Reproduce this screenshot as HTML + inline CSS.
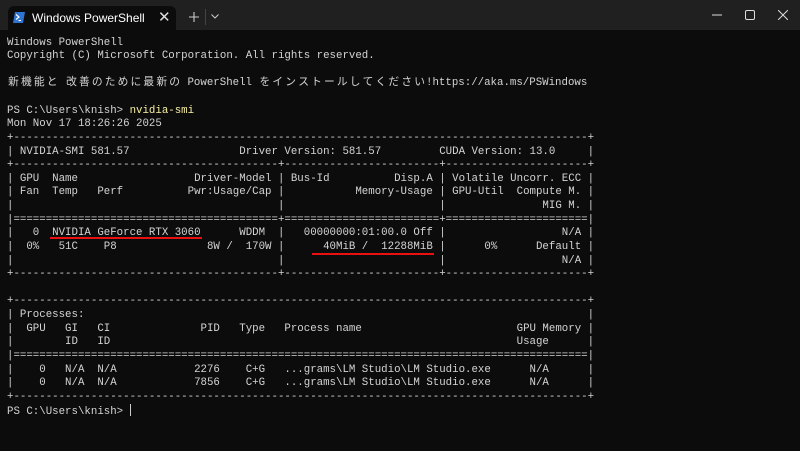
<!DOCTYPE html>
<html><head><meta charset="utf-8"><style>
html,body{margin:0;padding:0;width:800px;height:451px;overflow:hidden;background:#0c0c0c;}
#bar{position:absolute;left:0;top:0;width:800px;height:30px;background:#202020;}
#tab{position:absolute;left:8px;top:6px;width:168px;height:24px;background:#0c0c0c;border-radius:6px 6px 0 0;}
#tab .t{position:absolute;left:24px;top:5px;font:12px "Liberation Sans",sans-serif;color:#fff;}
#tab .x{position:absolute;left:150px;top:2px;font:15px "Liberation Sans",sans-serif;color:#ddd;}
pre{position:absolute;left:7px;top:36.5px;margin:0;font-family:"Liberation Mono","Noto Sans CJK JP",monospace;font-size:10.75px;line-height:13.62px;color:#d4d4d4;}
.c{display:inline-block;width:12.9px;text-align:center;}
.y{color:#f9f1a5;}
.u{position:absolute;height:2px;background:#e81010;}
</style></head><body>
<div id="bar"></div>
<div id="tab">
<svg style="position:absolute;left:5px;top:6px" width="12" height="11" viewBox="0 0 12 11"><path d="M2 0H12L10 11H0Z" fill="#2f74d0"/><path d="M3 2.5L6 5L3 7.5" stroke="#fff" stroke-width="1.2" fill="none"/><path d="M5.5 8.5H8" stroke="#fff" stroke-width="1"/></svg>
<span class="t">Windows PowerShell</span><span class="x">✕</span></div>
<svg style="position:absolute;left:189px;top:12px" width="10" height="10"><path d="M5 0V10M0 5H10" stroke="#ccc" stroke-width="1.1"/></svg>
<div style="position:absolute;left:205px;top:9px;width:1px;height:16px;background:#444"></div>
<svg style="position:absolute;left:211px;top:14px" width="8" height="5"><path d="M0.5 0.5L4 4L7.5 0.5" stroke="#ccc" fill="none"/></svg>
<svg style="position:absolute;left:712px;top:14px" width="10" height="2"><path d="M0 1H10" stroke="#ddd"/></svg>
<svg style="position:absolute;left:745px;top:10px" width="10" height="10"><rect x="0.5" y="0.5" width="9" height="9" rx="1.5" stroke="#ddd" fill="none"/></svg>
<svg style="position:absolute;left:778px;top:10px" width="10" height="10"><path d="M0 0L10 10M10 0L0 10" stroke="#ddd"/></svg>
<pre>Windows PowerShell
Copyright (C) Microsoft Corporation. All rights reserved.

<span class="c">新</span><span class="c">機</span><span class="c">能</span><span class="c">と</span> <span class="c">改</span><span class="c">善</span><span class="c">の</span><span class="c">た</span><span class="c">め</span><span class="c">に</span><span class="c">最</span><span class="c">新</span><span class="c">の</span> PowerShell <span class="c">を</span><span class="c">イ</span><span class="c">ン</span><span class="c">ス</span><span class="c">ト</span><span class="c">ー</span><span class="c">ル</span><span class="c">し</span><span class="c">て</span><span class="c">く</span><span class="c">だ</span><span class="c">さ</span><span class="c">い</span>!https://aka.ms/PSWindows

PS C:\Users\knish&gt; <span class="y">nvidia-smi</span>
Mon Nov 17 18:26:26 2025
+-----------------------------------------------------------------------------------------+
| NVIDIA-SMI 581.57                 Driver Version: 581.57         CUDA Version: 13.0     |
+-----------------------------------------+------------------------+----------------------+
| GPU  Name                  Driver-Model | Bus-Id          Disp.A | Volatile Uncorr. ECC |
| Fan  Temp   Perf          Pwr:Usage/Cap |           Memory-Usage | GPU-Util  Compute M. |
|                                         |                        |               MIG M. |
|=========================================+========================+======================|
|   0  NVIDIA GeForce RTX 3060      WDDM  |   00000000:01:00.0 Off |                  N/A |
|  0%   51C    P8              8W /  170W |      40MiB /  12288MiB |      0%      Default |
|                                         |                        |                  N/A |
+-----------------------------------------+------------------------+----------------------+

+-----------------------------------------------------------------------------------------+
| Processes:                                                                              |
|  GPU   GI   CI              PID   Type   Process name                        GPU Memory |
|        ID   ID                                                               Usage      |
|=========================================================================================|
|    0   N/A  N/A            2276    C+G   ...grams\LM Studio\LM Studio.exe      N/A      |
|    0   N/A  N/A            7856    C+G   ...grams\LM Studio\LM Studio.exe      N/A      |
+-----------------------------------------------------------------------------------------+
PS C:\Users\knish&gt; <span style="display:inline-block;width:1px;height:12px;background:#ccc;vertical-align:-2px"></span></pre>
<div class="u" style="left:50px;top:237px;width:152px"></div>
<div class="u" style="left:312px;top:253px;width:122px"></div>
</body></html>
